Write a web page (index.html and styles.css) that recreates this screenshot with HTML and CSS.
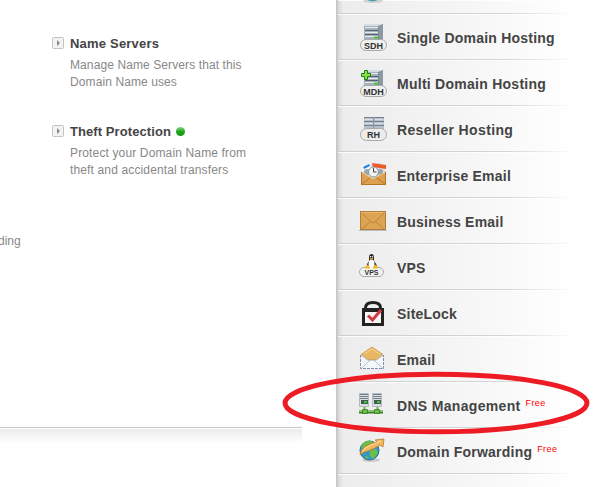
FILE: index.html
```html
<!DOCTYPE html>
<html lang="en">
<head>
    <meta charset="UTF-8">
    <title>Manage Domain</title>
    <link rel="stylesheet" href="styles.css">
</head>
<body>
    <div class="page">
        <div class="content">
            <div class="options">
                <div class="option">
                    <svg class="arrow" viewBox="0 0 12 12"><rect x=".5" y=".5" width="11" height="11" rx="1" fill="#f3f3f3" stroke="#c4c4c4"/><path d="M5 3v6l3-3z" fill="#888"/></svg>
                    <div>
                        <h3 class="t-name">Name Servers</h3>
                        <p class="p-name">Manage Name Servers that this<br>Domain Name uses</p>
                    </div>
                </div>
                <div class="option">
                    <svg class="arrow" viewBox="0 0 12 12"><rect x=".5" y=".5" width="11" height="11" rx="1" fill="#f3f3f3" stroke="#c4c4c4"/><path d="M5 3v6l3-3z" fill="#888"/></svg>
                    <div>
                        <h3 class="t-theft">Theft Protection <span class="dot"></span></h3>
                        <p class="p-theft">Protect your Domain Name from<br>theft and accidental transfers</p>
                    </div>
                </div>
            </div>
            <div class="cut">ding</div>
            <div class="footer-line"></div>
        </div>
        <ul class="menu">
            <li class="first">
                <svg viewBox="0 0 28 28"><ellipse cx="14" cy="26" rx="10" ry="2" fill="#d4d4d4"/><circle cx="13.500" cy="17" r="9.500" fill="#4b9fb5"/><path d="M12 22l6-2 2 4-5 2z" fill="#5daa50"/></svg>
            </li>
            <li>
                <svg viewBox="0 0 28 28">
                    <path d="M5 3l2-2h17v15l-5 3H5z" fill="#8c98a2"/><path d="M5 3h14v15H5z" fill="#a5b2bd"/><path d="M5 3l2-2h17l-5 2z" fill="#d8dee3"/>
                    <path d="M6 4.500h13M6 9.500h13M6 13.500h13" stroke="#e6ebee"/><path d="M6 7.500h13M6 11.500h13" stroke="#536470"/><path d="M19.500 3v14" stroke="#7b8892"/><path d="M15 14.500h4" stroke="#43c52c" stroke-width="2"/>
                    <rect x="1.500" y="16.500" width="26" height="11" rx="5.500" fill="#f0f0f0" stroke="#aaa"/><text x="14.500" y="25.500" class="tag">SDH</text>
                </svg>
                <span>Single Domain Hosting</span>
            </li>
            <li>
                <svg viewBox="0 0 28 28">
                    <path d="M5 3l2-2h17v15l-5 3H5z" fill="#8c98a2"/><path d="M5 3h14v15H5z" fill="#a5b2bd"/><path d="M5 3l2-2h17l-5 2z" fill="#d8dee3"/>
                    <path d="M6 4.500h13M6 9.500h13M6 13.500h13" stroke="#e6ebee"/><path d="M6 7.500h13M6 11.500h13" stroke="#536470"/><path d="M19.500 3v14" stroke="#7b8892"/><path d="M15 14.500h4" stroke="#43c52c" stroke-width="2"/>
                    <rect x="1.500" y="16.500" width="26" height="11" rx="5.500" fill="#f0f0f0" stroke="#aaa"/><text x="14.500" y="25.500" class="tag">MDH</text>
                    <path d="M5.500 1.500h3v3h3v3h-3v3h-3v-3h-3v-3h3z" fill="#8be04b" stroke="#20800e"/>
                </svg>
                <span class="s-multi">Multi Domain Hosting</span>
            </li>
            <li>
                <svg viewBox="0 0 28 28">
                    <path d="M5 2h20v14H5z" fill="#b4bfc9"/><path d="M5 2.500h20M5 6.500h20M5 10.500h20" stroke="#75838f"/><path d="M6 4.500h8M6 8.500h8M16 4.500h8M16 8.500h8" stroke="#dce2e7"/><path d="M14.500 2v13" stroke="#8a97a2"/>
                    <rect x="1.500" y="13.500" width="26" height="12" rx="6" fill="#ececec" stroke="#aaa"/><text x="14.500" y="22.800" class="tag">RH</text>
                </svg>
                <span class="s-reseller">Reseller Hosting</span>
            </li>
            <li>
                <svg viewBox="0 0 28 28">
                    <path d="M2 12l4-8 16-2 5 10v12H2z" fill="#d9dcde"/><path d="M3 5l7-3 3 5-10 4z" fill="#f5f9ff"/><path d="M4 6l6-3 1 2-6 3z" fill="#2d80d8"/><path d="M13 2l14 2v4l-13-2z" fill="#ed5a29"/>
                    <circle cx="8" cy="11" r="3" fill="#9da8ae"/><circle cx="21" cy="11" r="3" fill="#9da8ae"/><circle cx="14.500" cy="11" r="5" fill="#f0f2f3" stroke="#8b9398"/><path d="M14.500 7v4h3" fill="none" stroke="#444"/>
                    <path d="M2 11l12 7 13-7v13H2z" fill="#dda052"/><path d="M2 24l10-8M27 24l-10-8" stroke="#b37528"/><path d="M2 11l12 7 13-7" fill="none" stroke="#f0c276"/><path d="M2.500 11v12.500h24V11" fill="none" stroke="#b37528"/>
                </svg>
                <span>Enterprise Email</span>
            </li>
            <li>
                <svg viewBox="0 0 28 28">
                    <path d="M0 23.500h29" stroke="#bbb"/><rect x="1.500" y="4.500" width="25" height="18" fill="#dda452" stroke="#b07c3e"/><path d="M3 6l9 9q2 1.500 4 0l9-9M3 22l8-7M25 22l-8-7" fill="none" stroke="#b97f3a" stroke-width=".9"/><path d="M2 5.500h24" stroke="#efc078" stroke-width=".8"/>
                </svg>
                <span>Business Email</span>
            </li>
            <li>
                <svg viewBox="0 0 28 28">
                    <rect x=".5" y="14.500" width="24" height="9" rx="4.500" fill="#f1f1f1" stroke="#aaa"/>
                    <path d="M7.500 14q0-3 2.500-6V4.500Q10 1 12.500 1T15 4.500V8q3 3 3 6z" fill="#292929"/><ellipse cx="12.500" cy="11" rx="3" ry="4.500" fill="#fff"/><path d="M10.500 5h4l-2 2.500z" fill="#e7a51a"/><circle cx="11.500" cy="3.800" r=".7" fill="#fff"/><circle cx="13.500" cy="3.800" r=".7" fill="#fff"/>
                    <path d="M6 14l3-2.500 2.500 4H6.500zM19 14l-3-2.500-2.500 4h5z" fill="#f5b922"/><text x="12.500" y="22" class="tag tag-small">VPS</text>
                </svg>
                <span>VPS</span>
            </li>
            <li>
                <svg viewBox="0 0 28 28">
                    <path d="M6.500 11V9q0-5.500 7.500-5.500T21.500 9v2" fill="none" stroke="#222" stroke-width="3"/><path d="M3 9h22v18H3z" fill="#222"/><path d="M6 13h16v11H6z" fill="#f7f7f7"/><path d="M9 16.500l4.500 4.500 8.500-10" fill="none" stroke="#d23b44" stroke-width="3"/>
                </svg>
                <span>SiteLock</span>
            </li>
            <li>
                <svg viewBox="0 0 28 28">
                    <path d="M1.500 10L13 2 24.500 10v14H1.500z" fill="#f5f8fa"/><path d="M2 9.500L13 2l11 7.500-6 5H8z" fill="#e9b764" stroke="#c78f3c" stroke-width=".7"/><path d="M5 9l8-5 8 5" fill="none" stroke="#f7d797"/>
                    <path d="M2 10l8 6M24 10l-8 6M2 24l8-8q3-2 6 0l8 8" fill="none" stroke="#b9c3ca"/><path d="M1.500 10v13.500h23V10" fill="none" stroke="#5f97d0" stroke-dasharray="2 2"/><path d="M1.500 12v11.500h23V12" fill="none" stroke="#dc756f" stroke-dasharray="1 3"/>
                </svg>
                <span>Email</span>
            </li>
            <li>
                <svg viewBox="0 0 28 28">
                    <path d="M5.500 14v6M18.500 14v6" stroke="#6cb446" stroke-width="2"/><path d="M0 21h24" stroke="#397b25" stroke-width="3"/><path d="M0 20.500h24" stroke="#80cc59"/><path d="M3.500 18.500h5v4h-5zM15.500 18.500h5v4h-5z" fill="#6dbb48" stroke="#30701e" stroke-width=".7"/>
                    <path d="M.5 2.500h9v13h-9zM13.500 2.500h9v13h-9z" fill="#d9dee2" stroke="#b2babf"/><path d="M1 3.500h8M1 5.500h8M1 7.500h8M14 3.500h8M14 5.500h8M14 7.500h8" stroke="#71808a"/><path d="M2 9h7v4H2zM15 9h7v4h-7z" fill="#405b50"/><path d="M5 10h3v2H5zM18 10h3v2h-3z" fill="#43c52c"/>
                </svg>
                <span class="s-dns">DNS Management</span><sup>Free</sup>
            </li>
            <li>
                <svg viewBox="0 0 28 28">
                    <ellipse cx="12" cy="23" rx="9" ry="2" fill="#ccc"/><circle cx="10.500" cy="13.500" r="9.500" fill="#3697c5" stroke="#257195"/><path d="M4 6q6-4 10-1l-5 5-5 2-2-1zM11 14l6-2 2 4-5 6-3-3z" fill="#6abf45"/><path d="M6 19l4 1-2 2z" fill="#6abf45"/>
                    <path d="M1 18Q2 8 18 5l-2-2 9-1-1 8-3-2Q15 12 9 14q-5 1-8 4z" fill="#efb75d" stroke="#b77a2b" stroke-width=".8"/><path d="M3 14Q8 9 22 4" fill="none" stroke="#ffe2a5"/>
                </svg>
                <span>Domain Forwarding</span><sup>Free</sup>
            </li>
            <li></li>
        </ul>
        <svg class="marker" viewBox="0 0 310 66"><ellipse cx="155" cy="33" rx="151" ry="28.800" fill="none" stroke="#ed1c24" stroke-width="5"/></svg>
    </div>
</body>
</html>
```

FILE: styles.css
```css
body {
    margin: 0;
    background: #fff;
    font-family: "Liberation Sans", Arial, sans-serif;
}
.page {
    position: relative;
    display: flex;
    width: 602px;
    height: 487px;
    overflow: hidden;
}
.content {
    width: 336px;
    flex: none;
}
.options {
    height: 232px;
    padding: 35px 0 0 52px;
    box-sizing: border-box;
}
.option {
    display: flex;
    gap: 6px;
    height: 88px;
}
.arrow {
    width: 12px;
    height: 12px;
    margin-top: 2px;
}
h3 {
    margin: 0 0 5px;
    font-size: 13px;
    line-height: 17px;
    color: #444;
    white-space: nowrap;
}
.t-name {
    letter-spacing: 0.2px;
}
.t-theft {
    letter-spacing: 0.08px;
}
p {
    margin: 0;
    font-size: 12px;
    line-height: 17px;
    color: #888;
    white-space: nowrap;
}
.p-name {
    letter-spacing: 0.1px;
}
.p-theft {
    letter-spacing: 0.14px;
}
.dot {
    display: inline-block;
    width: 9px;
    height: 9px;
    margin-left: 1px;
    border-radius: 50%;
    vertical-align: 0;
    background: linear-gradient(#8bd98b, #22a51b 50%, #159510);
}
.cut {
    height: 195px;
    padding-top: 1px;
    box-sizing: border-box;
    margin-left: -2px;
    font-size: 12px;
    line-height: 17px;
    color: #888;
}
.footer-line {
    width: 302px;
    height: 16px;
    border-top: 1px solid #c6c6c6;
    background: linear-gradient(#fff 1px, #ececec 1px, #fff);
}
.menu {
    width: 241px;
    height: 487px;
    margin: 0;
    padding: 0;
    overflow: hidden;
    list-style: none;
    background: linear-gradient(to right, #c2c2c2, #dcdcdc 3px, rgba(236, 236, 236, 0) 7px),
        linear-gradient(to right, #ececec, #f3f3f3 40%, #fff);
}
.menu li {
    display: flex;
    align-items: center;
    height: 46px;
    padding-left: 23px;
    box-sizing: border-box;
    background: linear-gradient(to right, #cfcfcf, #d4d4d4 70%, #fff) 2px 100% / 239px 1px no-repeat,
        linear-gradient(to right, #fbfbfb, #fff) 2px 0 / 239px 1px no-repeat;
}
.menu li.first {
    height: 14px;
    align-items: flex-end;
    padding-bottom: 11px;
}
.menu svg {
    width: 28px;
    height: 28px;
    margin-right: 10px;
    flex: none;
}
.menu span {
    padding-top: 2px;
    font-size: 14px;
    font-weight: bold;
    line-height: 18px;
    letter-spacing: 0.22px;
    color: #444;
    white-space: nowrap;
}
.menu span.s-multi {
    letter-spacing: 0.26px;
}
.menu span.s-reseller {
    letter-spacing: 0.36px;
}
.menu span.s-dns {
    letter-spacing: 0.32px;
}
.menu sup {
    margin: -5px 0 0 5px;
    font-size: 9px;
    line-height: 10px;
    letter-spacing: 0.4px;
    color: #f00;
}
.tag {
    font-size: 9px;
    font-weight: bold;
    fill: #333;
    text-anchor: middle;
}
.tag-small {
    font-size: 7px;
}
/* red ring drawn over the menu */
.marker {
    position: absolute;
    left: 281px;
    top: 369.5px;
    width: 310px;
    height: 66px;
}
```
